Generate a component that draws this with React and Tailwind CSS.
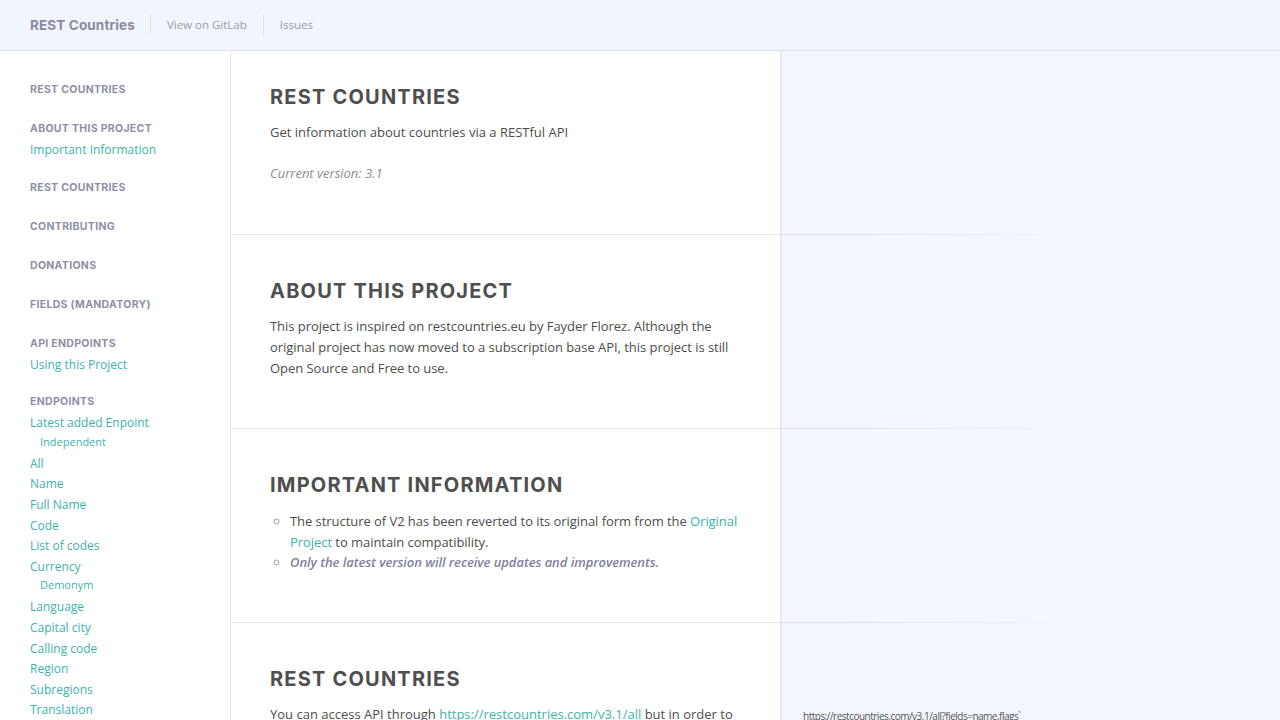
import React from "react";

const headFont = { fontFamily: '"Inter", "DejaVu Sans", sans-serif' };

function SideHead({ children, first, afterLink }) {
  return (
    <div className={`text-[10.5px] leading-[20px] font-bold uppercase tracking-[0.03em] text-[#8e8fa6] pb-[1px] ${first ? "" : afterLink ? "mt-[17px]" : "mt-[18px]"}`} style={headFont}>
      {children}
    </div>
  );
}
function SideLink({ children, sub }) {
  return (
    <div className={`${sub ? "pl-[10px] text-[11px] leading-[20px] -mt-[2px] pb-[2px]" : "text-[12px] leading-[20.6px]"} text-[#3db3aa]`}>
      {children}
    </div>
  );
}

function Section({ first, children, right }) {
  return (
    <div className="flex">
      <div className={`w-[550px] shrink-0 border-r border-b border-[#e3e6ee] bg-white pl-[39px] pr-[40px] ${first ? "pt-[34px] pb-[50px]" : "pt-[44px] pb-[49px]"}`}>
        {children}
      </div>
      <div className="flex-1 flex flex-col justify-end bg-[#f3f6fd] border-l border-[#e9ecf6]">
        {right}
        <div className="h-px w-[290px] bg-gradient-to-r from-[#d8dce6] via-[#e2e6ef] to-transparent" />
      </div>
    </div>
  );
}

function H2({ children, mb = "mb-[13px]" }) {
  return (
    <h2 className={`text-[20px] leading-[24px] font-bold uppercase tracking-[0.06em] text-[#4f4f4f] ${mb}`} style={headFont}>
      {children}
    </h2>
  );
}

export default function App() {
  return (
    <div className="w-[1280px] h-[720px] overflow-hidden flex flex-col bg-white text-[#4d4d4d]" style={{ fontFamily: '"Open Sans", "Liberation Sans", sans-serif' }}>
      <header className="h-[51px] shrink-0 flex items-center bg-[#f1f5fd] border-b border-[#dde2ea] pl-[30px]">
        <span className="text-[13.5px] font-bold tracking-[0.01em] text-[#8a8ba0] pr-[15px]" style={headFont}>REST Countries</span>
        <span className="h-[20px] w-px bg-[#e0e3ea]" />
        <span className="text-[11.5px] text-[#9a9bab] px-[16px]">View on GitLab</span>
        <span className="h-[20px] w-px bg-[#e0e3ea]" />
        <span className="text-[11.5px] text-[#9a9bab] px-[16px]">Issues</span>
      </header>
      <div className="flex flex-1 min-h-0">
        <aside className="w-[231px] shrink-0 border-r border-[#e2e4ea] bg-white pl-[30px] pt-[29px]">
          <SideHead first>REST Countries</SideHead>
          <SideHead>About this project</SideHead>
          <SideLink>Important Information</SideLink>
          <SideHead afterLink>REST Countries</SideHead>
          <SideHead>Contributing</SideHead>
          <SideHead>Donations</SideHead>
          <SideHead>Fields (mandatory)</SideHead>
          <SideHead>API Endpoints</SideHead>
          <SideLink>Using this Project</SideLink>
          <SideHead afterLink>Endpoints</SideHead>
          <SideLink>Latest added Enpoint</SideLink>
          <SideLink sub>Independent</SideLink>
          <SideLink>All</SideLink>
          <SideLink>Name</SideLink>
          <SideLink>Full Name</SideLink>
          <SideLink>Code</SideLink>
          <SideLink>List of codes</SideLink>
          <SideLink>Currency</SideLink>
          <SideLink sub>Demonym</SideLink>
          <SideLink>Language</SideLink>
          <SideLink>Capital city</SideLink>
          <SideLink>Calling code</SideLink>
          <SideLink>Region</SideLink>
          <SideLink>Subregions</SideLink>
          <SideLink>Translation</SideLink>
        </aside>
        <main className="flex-1 flex flex-col bg-[#f3f6fd]">
          <Section first>
            <H2>REST Countries</H2>
            <p className="text-[13px] leading-[21px] mb-[20px]">Get information about countries via a RESTful API</p>
            <p className="text-[13px] leading-[21px] italic text-[#8c8c8c]">Current version: 3.1</p>
          </Section>
          <Section>
            <H2>About this project</H2>
            <p className="text-[13px] leading-[21px] tracking-[-0.003em]">
              This project is inspired on restcountries.eu by Fayder Florez. Although the original project has now moved to a subscription base API, this project is still Open Source and Free to use.
            </p>
          </Section>
          <Section>
            <H2 mb="mb-[14px]">Important Information</H2>
            <ul className="text-[13px] leading-[20.5px] list-[circle] pl-[20px] -mr-[8px] tracking-[-0.004em] marker:text-[#9a9aa8]">
              <li>
                The structure of V2 has been reverted to its original form from the <span className="text-[#3db3aa]">Original Project</span> to maintain compatibility.
              </li>
              <li className="italic font-semibold text-[#7f819b]">Only the latest version will receive updates and improvements.</li>
            </ul>
          </Section>
          <div className="flex">
            <div className="w-[550px] shrink-0 border-r border-[#e3e6ee] bg-white pl-[39px] pr-[40px] pt-[44px]">
              <H2>REST Countries</H2>
              <p className="text-[13px] leading-[21px]">
                You can access API through <span className="text-[#3db3aa]">https://restcountries.com/v3.1/all</span> but in order to get a faster response, you should filter the results by the fields you need.
              </p>
            </div>
            <div className="flex-1 bg-[#f3f6fd] border-l border-[#e9ecf6] pl-[21px] pt-[86px]">
              <div className="text-[10px] leading-[14px] tracking-[-0.05em] text-[#555]">https://restcountries.com/v3.1/all?fields=name,flags`</div>
            </div>
          </div>
        </main>
      </div>
    </div>
  );
}
